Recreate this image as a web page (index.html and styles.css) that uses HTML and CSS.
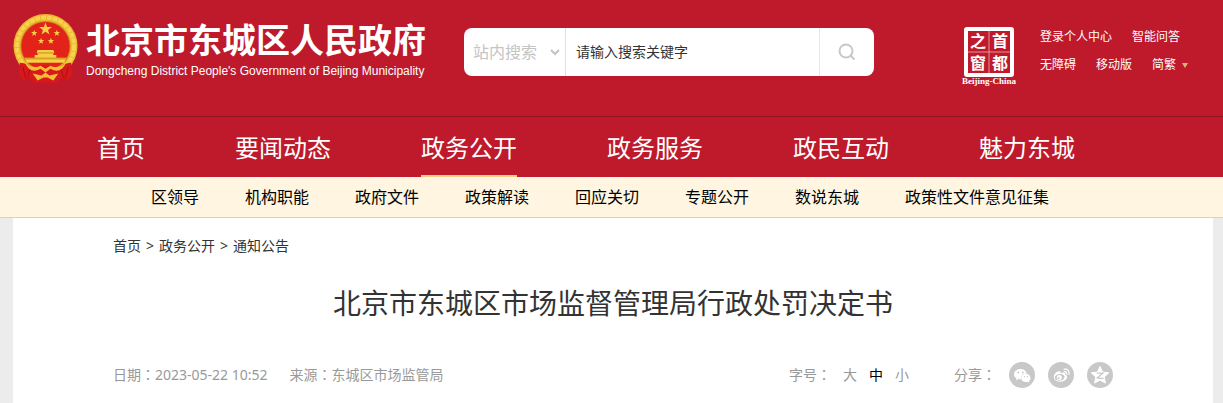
FILE: index.html
```html
<!DOCTYPE html>
<html lang="zh-CN">
<head>
    <meta charset="UTF-8">
    <meta name="viewport" content="width=device-width, initial-scale=1.0">
    <title>北京市东城区市场监督管理局行政处罚决定书</title>
    <link rel="stylesheet" href="styles.css">
</head>
<body>
    <header class="header">
        <div class="top">
            <a href="#" class="brand">
                <svg class="emblem" viewBox="0 0 66 70" aria-hidden="true">
                    <path d="M8 50l-2 12 5 6 6-2 5 4h22l5-4 6 2 5-6-2-12z" fill="#d3151b"/>
                    <circle cx="33" cy="33" r="32.500" fill="#ecb730"/>
                    <circle cx="33" cy="33" r="29" fill="none" stroke="#f7d24e" stroke-width="4" stroke-dasharray="5 1"/>
                    <circle cx="33" cy="33" r="25.500" fill="#c98b1c"/>
                    <circle cx="33" cy="33" r="24.500" fill="#e32219"/>
                    <g fill="#f6cf45">
                        <path id="star" d="M33 9l1.600 4.600 4.900.1-3.900 3 1.400 4.700-4-2.800-4 2.800 1.400-4.700-3.900-3 4.900-.1z"/>
                        <use href="#star" transform="translate(5 12) scale(.5)"/>
                        <use href="#star" transform="translate(28 12) scale(.5)"/>
                        <use href="#star" transform="translate(12 20) scale(.5)"/>
                        <use href="#star" transform="translate(22 20) scale(.5)"/>
                        <path d="M25 37h16l1 3h-1v2h3v3H22v-3h3v-2h-1z"/>
                        <path d="M12 45h42l-2 5H14z"/>
                    </g>
                    <path d="M25 40h16M13 46h40" stroke="#c98a18"/>
                    <path d="M7 50c7 0 11 4 15 7 4-3 7-5 11-5s7 2 11 5c4-3 8-7 15-7l1 12-5 6-6-3-5 5H22l-5-5-6 3-5-6z" fill="#d8191b"/>
                    <path d="M12 50c6 5 12 5 16 3l5 3 5-3c4 2 10 2 16-3-4 8-9 10-16 6l-5 4-5-4c-7 4-12 2-16-6zM20 61l9 2 4-3 4 3 9-2-5 7-6-3h-4l-6 3z" fill="#f3bd35"/>
                    <path d="M10 54l3 12M56 54l-3 12M17 57l-2 8M49 57l2 8" stroke="#a90f16" fill="none"/>
                </svg>
                <span class="brand-text">
                    <strong>北京市东城区人民政府</strong>
                    <span class="brand-en">Dongcheng District People's Government of Beijing Municipality</span>
                </span>
            </a>
            <form class="search">
                <div class="search-scope">
                    <select aria-label="搜索范围">
                        <option>站内搜索</option>
                    </select>
                    <svg class="chevron" viewBox="0 0 10 7" aria-hidden="true"><path d="M1 1l4 4 4-4" fill="none" stroke="#c4c4c4" stroke-width="2"/></svg>
                </div>
                <input type="text" aria-label="搜索关键字" placeholder="请输入搜索关键字">
                <button type="button" aria-label="搜索">
                    <svg viewBox="0 0 18 18" aria-hidden="true"><circle cx="8" cy="8" r="6.500"/><path d="M12.500 12.500l4 4"/></svg>
                </button>
            </form>
            <div class="portal">
                <a href="#" class="capital" aria-label="首都之窗">
                    <svg viewBox="0 0 54 58" aria-hidden="true">
                        <rect x="4" y="2" width="46" height="46" rx="1" fill="none" stroke="#fff" stroke-width="4"/>
                        <path d="M27 4v42M6 25h42" stroke="#e5929b"/>
                        <g class="seal">
                            <text x="8" y="20">之</text>
                            <text x="30" y="20">首</text>
                            <text x="8" y="42">窗</text>
                            <text x="30" y="42">都</text>
                        </g>
                        <text class="seal-caption" x="27" y="57">Beijing-China</text>
                    </svg>
                </a>
                <div class="quick-links">
                    <div><a href="#">登录个人中心</a><a href="#">智能问答</a></div>
                    <div><a href="#">无障碍</a><a href="#">移动版</a><a href="#" class="lang">简繁<i></i></a></div>
                </div>
            </div>
        </div>
        <nav class="nav">
            <a href="#">首页</a>
            <a href="#">要闻动态</a>
            <a href="#" class="active">政务公开</a>
            <a href="#">政务服务</a>
            <a href="#">政民互动</a>
            <a href="#">魅力东城</a>
        </nav>
    </header>

    <nav class="subnav">
        <a href="#">区领导</a>
        <a href="#">机构职能</a>
        <a href="#">政府文件</a>
        <a href="#">政策解读</a>
        <a href="#">回应关切</a>
        <a href="#">专题公开</a>
        <a href="#">数说东城</a>
        <a href="#">政策性文件意见征集</a>
    </nav>

    <main class="content">
        <div class="crumbs">
            <a href="#">首页</a><span>&gt;</span><a href="#">政务公开</a><span>&gt;</span><a href="#">通知公告</a>
        </div>
        <h1>北京市东城区市场监督管理局行政处罚决定书</h1>
        <div class="meta">
            <div class="info">
                <span>日期<span class="colon" lang="zh-TW">：</span>2023-05-22 10:52</span>
                <span>来源<span class="colon" lang="zh-TW">：</span>东城区市场监管局</span>
            </div>
            <div class="sizes">
                <span>字号<span class="colon" lang="zh-TW">：</span></span>
                <button type="button">大</button>
                <button type="button" class="current">中</button>
                <button type="button">小</button>
            </div>
            <div class="share">
                <span>分享<span class="colon" lang="zh-TW">：</span></span>
                <a href="#" aria-label="微信">
                    <svg viewBox="0 0 26 26">
                        <circle cx="13" cy="13" r="13" fill="#c8c8c8"/>
                        <path d="M11.500 7C8 7 5 9.200 5 12.200c0 1.700.9 3.100 2.400 4.100L6.900 18.400l2.500-1.300c.8.2 1.500.3 2.500.3-.4-3.500 2.500-6 6-5.800C17.300 8.900 14.600 7 11.500 7z" fill="#fff"/>
                        <path d="M21.500 15.900c0-2.400-2.200-4.100-4.700-4.100s-4.600 1.800-4.600 4.100 2.100 4.100 4.600 4.100c.6 0 1.200-.1 1.700-.3l1.900 1-.5-1.700c1-.8 1.600-1.900 1.600-3.100z" fill="#fff"/>
                        <g fill="#c8c8c8"><circle cx="9.300" cy="10.500" r=".9"/><circle cx="13.800" cy="10.500" r=".9"/><circle cx="15.400" cy="14.600" r=".7"/><circle cx="18.500" cy="14.600" r=".7"/></g>
                    </svg>
                </a>
                <a href="#" aria-label="微博">
                    <svg viewBox="0 0 26 26">
                        <circle cx="13" cy="13" r="13" fill="#c8c8c8"/>
                        <path d="M12 9.500c-1-.9-3.300 0-4.900 1.900-3.100 3.500-.5 8.300 4.900 8.300 4.800 0 8.500-3.500 6.700-6-.5-.6-1.100-.8-1.500-.9.500-2.100-1.500-2.800-4.600-1.600.2-.7.100-1.300-.6-1.700z" fill="#fff"/>
                        <ellipse cx="11.700" cy="15.300" rx="4.900" ry="3.300" fill="#c8c8c8" transform="rotate(-8 11.700 15.300)"/>
                        <circle cx="11.300" cy="15.500" r="2.500" fill="#fff"/>
                        <circle cx="10.700" cy="16" r="1" fill="#c8c8c8"/>
                        <path d="M16 7.200c3.400-.7 6 2 5 5.500M16.400 9.600c1.600-.3 2.700 1 2.200 2.500" fill="none" stroke="#fff" stroke-width="1.200" stroke-linecap="round"/>
                    </svg>
                </a>
                <a href="#" aria-label="QQ空间">
                    <svg viewBox="0 0 26 26">
                        <circle cx="13" cy="13" r="13" fill="#c8c8c8"/>
                        <path d="M13 4.500l2.600 5.600 6.200.7-4.600 4.200 1.200 6.100-5.400-3-5.400 3 1.200-6.100-4.600-4.200 6.200-.7z" fill="#fff" stroke="#fff" stroke-linejoin="round"/>
                        <path d="M9.800 11.200h6l-5.500 4.700c2 .6 4 .6 6.300.2" fill="none" stroke="#c8c8c8" stroke-width="1.300"/>
                    </svg>
                </a>
            </div>
        </div>
    </main>
</body>
</html>
```
FILE: styles.css
```css
/* General Styles */
* {
    box-sizing: border-box;
}

body {
    margin: 0;
    min-height: 100vh;
    display: flex;
    flex-direction: column;
    font-family: "Noto Sans", "Noto Sans CJK SC", sans-serif;
    font-size: 14px;
    line-height: 20px;
    color: #333;
    background: #ececec;
}

a {
    color: inherit;
    text-decoration: none;
}

svg {
    display: block;
}

/* Header */
.header {
    background: #be1a2c;
    color: #fff;
}

.top {
    display: flex;
    align-items: flex-start;
    height: 116px;
    padding: 13px 35px 0 13px;
}

.brand {
    display: flex;
    gap: 8px;
    margin-right: 38px;
}

.emblem {
    width: 65px;
    height: 70px;
}

.brand-text {
    display: flex;
    flex-direction: column;
    padding-top: 6px;
    white-space: nowrap;
}

.brand-text strong {
    font-family: "Noto Sans CJK SC", sans-serif;
    font-size: 34px;
    line-height: 40px;
}

.brand-en {
    font-family: "Liberation Sans Narrow", "Liberation Sans", sans-serif;
    font-size: 12px;
    line-height: 24px;
}

.search {
    display: flex;
    flex: 0 1 410px;
    height: 48px;
    margin-top: 15px;
    background: #fff;
    border-radius: 8px;
    overflow: hidden;
}

.search-scope {
    display: flex;
    align-items: center;
    width: 102px;
    padding: 0 5px 0 9px;
    border-right: 1px solid #e0e0e0;
}

.search-scope select {
    flex: 1;
    min-width: 0;
    padding: 0;
    border: 0;
    appearance: none;
    background: none;
    font: inherit;
    font-size: 16px;
    line-height: 24px;
    color: #c4c4c4;
}

.chevron {
    width: 10px;
    height: 7px;
}

.search input {
    flex: 1;
    min-width: 0;
    padding: 0 10px;
    border: 0;
    font: inherit;
    color: #333;
}

.search input::placeholder {
    color: #333;
    opacity: 1;
}

.search button {
    display: flex;
    align-items: center;
    justify-content: center;
    width: 55px;
    padding: 0;
    border: 0;
    border-left: 1px solid #e8e8e8;
    background: none;
    cursor: pointer;
}

.search button svg {
    width: 18px;
    height: 18px;
    fill: none;
    stroke: #c8c8c8;
    stroke-width: 2;
}

.portal {
    display: flex;
    gap: 24px;
    margin-left: auto;
}

.capital {
    padding-top: 14px;
}

.capital svg {
    width: 54px;
    height: 58px;
    overflow: visible;
}

.seal {
    fill: #fff;
    font-family: "Noto Sans CJK SC", sans-serif;
    font-size: 16px;
    font-weight: bold;
}

.seal-caption {
    fill: #fff;
    font-family: "Liberation Serif", serif;
    font-size: 9px;
    font-weight: bold;
    text-anchor: middle;
}

.quick-links {
    padding-top: 10px;
    font-size: 12px;
    line-height: 28px;
    white-space: nowrap;
}

.quick-links div {
    display: flex;
    gap: 20px;
}

.lang {
    display: flex;
    align-items: center;
    gap: 6px;
}

.lang i {
    border: 3px solid transparent;
    border-top: 5px solid #d9b37a;
    border-bottom: 0;
}

/* Navigation */
.nav {
    display: flex;
    gap: 90px;
    padding: 0 97px;
    border-top: 1px solid #8f1421;
    font-size: 24px;
    line-height: 58px;
    white-space: nowrap;
}

.nav a {
    padding-top: 2px;
    height: 60px;
    border-bottom: 2px solid transparent;
}

.nav .active {
    border-color: #f5cf85;
}

.subnav {
    display: flex;
    gap: 46px;
    padding: 0 151px;
    background: #fff5e0;
    border-bottom: 1px solid #f5cf85;
    color: #000;
    font-size: 16px;
    line-height: 40px;
    white-space: nowrap;
}

/* Article */
.content {
    flex: 1;
    margin: 0 10px 0 13px;
    padding: 18px 100px 0;
    background: #fff;
}

.crumbs {
    display: flex;
    gap: 5px;
}

h1 {
    margin: 25px 0 37px;
    font-size: 28px;
    font-weight: normal;
    line-height: 44px;
    text-align: center;
}

.meta {
    display: flex;
    align-items: center;
    color: #999;
}

.info {
    display: flex;
    gap: 22px;
    margin-right: auto;
}

.colon {
    font-family: "Noto Sans CJK TC", sans-serif;
    line-height: 1;
}

.sizes {
    display: flex;
    align-items: center;
    gap: 12px;
    margin-right: 45px;
}

.sizes button {
    padding: 0;
    border: 0;
    background: none;
    font: inherit;
    color: inherit;
    cursor: pointer;
}

.sizes .current {
    color: #000;
}

.share {
    display: flex;
    align-items: center;
    gap: 13px;
}

.share svg {
    width: 26px;
    height: 26px;
}
```
